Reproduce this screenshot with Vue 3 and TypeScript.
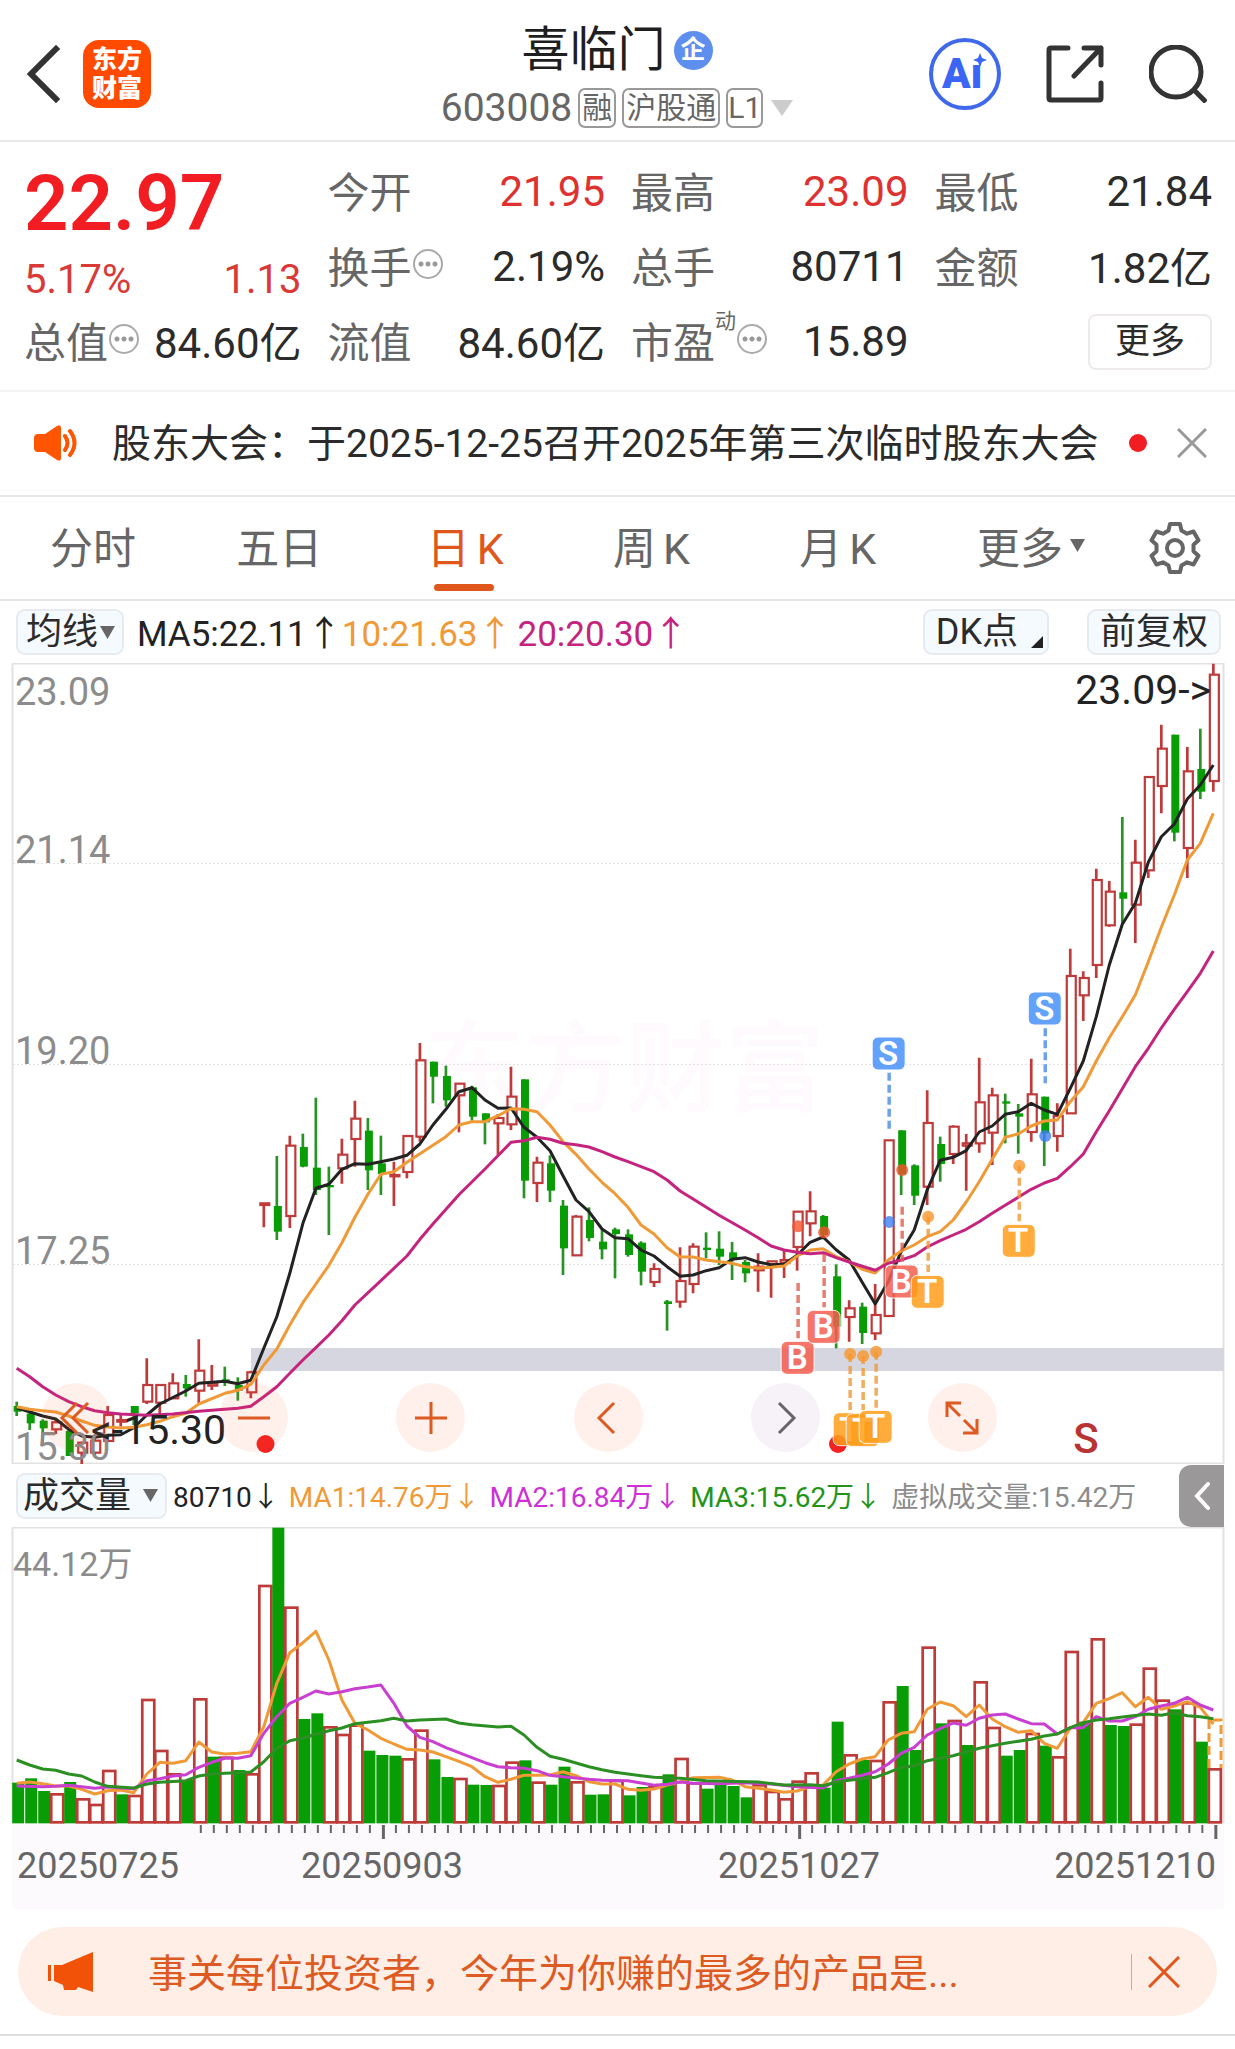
<script setup lang="ts">
import { ref } from 'vue'

type Kind = 'r' | 'g'
type Candle = [Kind, number, number, number, number]
type Point = [number, number]

const STEP = 13.007
const FIRST_X = 16.7
const cx = (i: number): number => FIRST_X + i * STEP
// Levels are stored in thirds of a pixel, counted from a shared base line of each pane.
const py = (v: number): number => (v + 1011) / 3
const vy = (v: number): number => (v - 201) / 3
const VOLUME_BASE = vy(1087)

// kind, high, body top, body bottom, low
const candles: Candle[] = [
  ['g', 1205, 1218, 1235, 1248], ['g', 1235, 1241, 1270, 1290], ['g', 1258, 1262, 1285, 1330], ['r', 1258, 1267, 1288, 1302],
  ['g', 1290, 1293, 1368, 1368], ['r', 1325, 1328, 1358, 1392], ['r', 1315, 1322, 1358, 1370], ['r', 1218, 1245, 1323, 1323],
  ['r', 1245, 1260, 1265, 1280], ['g', 1218, 1218, 1240, 1275], ['r', 1075, 1155, 1205, 1212], ['r', 1155, 1155, 1208, 1242],
  ['r', 1120, 1150, 1195, 1197], ['g', 1125, 1152, 1165, 1190], ['r', 1018, 1112, 1172, 1210], ['r', 1095, 1150, 1157, 1170],
  ['g', 1100, 1138, 1144, 1158], ['g', 1132, 1155, 1172, 1202], ['r', 1112, 1117, 1177, 1195], ['r', 608, 610, 615, 682],
  ['g', 468, 618, 695, 720], ['r', 407, 437, 648, 684], ['g', 401, 441, 500, 502], ['g', 293, 503, 570, 585],
  ['g', 500, 555, 562, 705], ['r', 416, 464, 505, 551], ['r', 302, 356, 417, 500], ['g', 354, 392, 511, 570],
  ['g', 407, 490, 522, 585], ['r', 485, 525, 529, 618], ['r', 408, 408, 516, 535], ['r', 129, 181, 410, 425],
  ['g', 185, 185, 230, 310], ['g', 197, 228, 301, 320], ['r', 251, 251, 286, 397], ['g', 257, 262, 350, 362],
  ['g', 340, 340, 367, 433], ['r', 342, 354, 370, 464], ['r', 200, 290, 373, 390], ['g', 238, 238, 542, 595],
  ['r', 470, 488, 549, 606], ['g', 466, 490, 572, 606], ['g', 600, 617, 745, 825], ['r', 645, 650, 766, 768],
  ['g', 622, 660, 714, 724], ['g', 690, 725, 748, 778], ['g', 683, 688, 702, 835], ['g', 688, 703, 765, 770],
  ['g', 724, 728, 815, 856], ['r', 790, 807, 846, 861], ['g', 900, 904, 912, 992], ['r', 742, 843, 905, 923],
  ['r', 730, 740, 852, 880], ['g', 697, 743, 750, 775], ['g', 694, 746, 770, 795], ['g', 726, 757, 780, 840],
  ['g', 780, 786, 820, 847], ['r', 760, 800, 811, 875], ['r', 782, 784, 793, 893], ['r', 752, 780, 788, 834],
  ['r', 635, 635, 741, 812], ['r', 574, 634, 670, 709], ['g', 645, 648, 705, 718], ['g', 793, 829, 980, 1045],
  ['r', 901, 925, 951, 1025], ['g', 908, 920, 999, 1032], ['r', 852, 945, 1000, 1020], ['r', 421, 421, 948, 948],
  ['g', 391, 391, 523, 585], ['g', 493, 496, 587, 615], ['r', 271, 369, 560, 615], ['g', 410, 432, 492, 545],
  ['r', 376, 380, 462, 492], ['r', 402, 430, 437, 572], ['r', 173, 307, 430, 458], ['r', 263, 286, 398, 495],
  ['g', 281, 304, 311, 430], ['g', 312, 340, 350, 461], ['r', 176, 283, 396, 425], ['g', 290, 290, 400, 498],
  ['r', 310, 348, 408, 455], ['r', -154, -72, 340, 340], ['r', -86, -66, -14, 63], ['r', -394, -360, -105, -66],
  ['r', -357, -325, -224, -220], ['g', -549, -323, -304, -225], ['r', -481, -412, -286, -171], ['r', -669, -669, -389, -366],
  ['r', -826, -754, -642, -560], ['g', -796, -796, -502, -476], ['r', -759, -686, -456, -366], ['g', -814, -693, -625, -603],
  ['r', -1009, -976, -657, -625],
]

const priceLines: { color: string; points: Point[] }[] = [
  {
    color: '#222222',
    points: [[0, 1223], [2, 1248], [3, 1257], [4, 1288], [5, 1308], [6, 1312], [7, 1306], [8, 1304], [9, 1283], [10, 1245], [11, 1212], [13, 1173], [14, 1150], [16, 1144], [17, 1151], [18, 1141], [19, 1045], [20, 950], [21, 820], [22, 670], [23, 565], [24, 553], [25, 508], [26, 491], [27, 493], [28, 485], [29, 477], [30, 466], [31, 432], [32, 375], [33, 328], [34, 275], [35, 263], [36, 300], [37, 325], [38, 324], [39, 382], [40, 412], [41, 452], [42, 527], [43, 600], [44, 635], [45, 687], [46, 713], [47, 716], [48, 750], [49, 768], [50, 800], [51, 829], [52, 825], [53, 812], [54, 803], [55, 778], [56, 773], [57, 786], [58, 794], [59, 793], [60, 766], [61, 727], [62, 711], [63, 749], [64, 780], [65, 847], [66, 912], [67, 845], [68, 755], [69, 690], [70, 570], [71, 481], [72, 472], [73, 452], [74, 396], [75, 378], [76, 343], [77, 335], [78, 310], [79, 330], [80, 343], [81, 265], [82, 183], [83, 50], [84, -105], [85, -227], [86, -290], [87, -413], [88, -490], [89, -528], [90, -603], [91, -645], [92, -705]],
  },
  {
    color: '#f09a37',
    points: [[0, 1220], [1, 1228], [2, 1232], [3, 1236], [4, 1248], [5, 1263], [6, 1276], [7, 1281], [8, 1284], [9, 1282], [10, 1274], [11, 1264], [12, 1250], [13, 1240], [14, 1212], [16, 1180], [17, 1171], [18, 1153], [19, 1095], [20, 1047], [21, 975], [22, 908], [23, 852], [24, 796], [25, 728], [26, 652], [27, 583], [28, 523], [29, 515], [30, 487], [33, 410], [34, 375], [35, 365], [36, 365], [37, 347], [38, 326], [39, 328], [40, 335], [41, 375], [42, 425], [43, 463], [44, 507], [45, 547], [46, 581], [47, 622], [48, 675], [49, 702], [50, 743], [51, 771], [52, 771], [53, 780], [54, 785], [55, 790], [56, 800], [57, 804], [58, 802], [59, 798], [60, 768], [61, 750], [62, 746], [63, 770], [64, 785], [65, 808], [66, 819], [67, 780], [68, 753], [69, 735], [70, 710], [71, 695], [72, 660], [73, 606], [74, 545], [75, 478], [76, 412], [77, 402], [78, 378], [79, 363], [80, 360], [81, 305], [82, 260], [83, 183], [84, 113], [85, 50], [86, -15], [87, -115], [88, -218], [89, -315], [90, -420], [91, -470], [92, -560]],
  },
  {
    color: '#c4247e',
    points: [[0, 1105], [1, 1130], [2, 1160], [3, 1185], [4, 1205], [5, 1220], [6, 1232], [7, 1238], [8, 1242], [10, 1246], [12, 1242], [14, 1234], [16, 1228], [17, 1225], [18, 1219], [19, 1190], [20, 1160], [21, 1120], [22, 1080], [23, 1043], [24, 1005], [25, 962], [26, 915], [28, 842], [30, 768], [31, 718], [32, 672], [34, 584], [36, 507], [38, 427], [39, 422], [40, 412], [41, 418], [42, 430], [43, 434], [44, 441], [45, 455], [46, 471], [47, 485], [48, 500], [49, 515], [50, 540], [51, 573], [52, 597], [54, 646], [56, 690], [57, 713], [58, 738], [59, 750], [60, 757], [61, 761], [62, 758], [63, 773], [64, 786], [65, 799], [66, 811], [67, 790], [68, 780], [69, 767], [70, 741], [71, 722], [72, 705], [73, 688], [74, 665], [75, 640], [76, 616], [77, 592], [78, 568], [79, 549], [80, 535], [81, 500], [82, 462], [83, 395], [84, 332], [85, 266], [86, 200], [87, 145], [88, 84], [89, 28], [90, -25], [91, -80], [92, -147]],
  },
]

const volumes: string[] = (
  'g968 g955 g993 r1003 g966 r1018 r1035 r933 g1003 r1008 r720 r873 r943 g960 r718 g890 r893 g930 r943 r378 ' +
  'g203 r443 g777 g760 r802 r825 r797 g872 g885 g887 r898 r812 g898 g951 r957 g974 g975 r978 r908 g901 ' +
  'r968 g974 g920 r967 g1004 g1003 r963 g1006 g981 r980 g943 r897 r970 g986 g975 g978 g1012 r976 r996 r1018 ' +
  'r965 r940 g983 g785 r886 g900 r903 r727 g678 g870 r563 g790 r783 g855 r667 r804 g887 g870 r822 g857 ' +
  'r892 r576 g785 r538 g795 g798 r794 r626 r722 g748 r730 g845 r928'
).split(' ')

const bars = volumes.map((s, i) => ({ green: s[0] === 'g', x: cx(i), y: vy(Number(s.slice(1))) }))

const volumeLines: { color: string; points: Point[] }[] = [
  {
    color: '#f09a37',
    points: [[0, 970], [1, 966], [2, 971], [3, 978], [4, 978], [5, 988], [6, 1002], [7, 992], [8, 990], [9, 998], [10, 942], [11, 907], [12, 910], [13, 902], [14, 846], [15, 876], [16, 882], [17, 880], [18, 875], [19, 800], [20, 670], [21, 578], [22, 548], [23, 514], [24, 600], [25, 720], [26, 790], [27, 810], [28, 835], [29, 852], [30, 868], [31, 870], [32, 876], [33, 890], [34, 904], [35, 920], [36, 950], [37, 967], [38, 958], [39, 946], [40, 946], [41, 945], [42, 935], [43, 947], [44, 965], [45, 972], [46, 972], [47, 988], [48, 991], [49, 987], [50, 975], [51, 966], [52, 953], [54, 952], [55, 960], [56, 980], [57, 985], [58, 990], [59, 997], [60, 993], [61, 980], [62, 975], [63, 935], [64, 912], [65, 897], [66, 890], [67, 840], [68, 820], [69, 815], [70, 748], [71, 726], [72, 737], [73, 770], [74, 735], [75, 777], [76, 800], [77, 817], [78, 812], [79, 850], [80, 865], [81, 805], [82, 787], [83, 730], [84, 716], [85, 698], [86, 740], [87, 712], [88, 748], [89, 738], [90, 725], [91, 742], [92, 792]],
  },
  {
    color: '#c93fd0',
    points: [[0, 978], [2, 980], [3, 979], [4, 976], [5, 980], [6, 985], [7, 981], [9, 986], [10, 962], [11, 956], [12, 948], [13, 944], [14, 922], [15, 907], [16, 895], [17, 895], [18, 887], [19, 820], [20, 770], [21, 730], [22, 712], [23, 693], [24, 702], [25, 695], [26, 686], [27, 681], [28, 675], [29, 730], [30, 798], [31, 832], [32, 845], [33, 863], [34, 878], [35, 893], [36, 908], [37, 920], [38, 923], [39, 925], [40, 932], [41, 946], [42, 950], [43, 954], [44, 958], [45, 961], [47, 962], [48, 969], [49, 976], [50, 973], [51, 966], [52, 970], [54, 971], [56, 968], [58, 972], [60, 980], [62, 984], [63, 962], [64, 955], [65, 946], [66, 935], [67, 912], [68, 880], [69, 862], [70, 825], [71, 806], [72, 789], [73, 796], [74, 775], [75, 765], [76, 762], [77, 777], [78, 791], [79, 792], [80, 822], [81, 803], [82, 803], [83, 770], [84, 783], [85, 783], [86, 770], [87, 748], [88, 738], [89, 730], [90, 712], [91, 735], [92, 750]],
  },
  {
    color: '#2b8f23',
    points: [[0, 900], [1, 915], [2, 927], [3, 931], [4, 942], [5, 948], [6, 966], [7, 979], [9, 984], [10, 972], [11, 967], [13, 962], [14, 948], [15, 942], [16, 940], [17, 938], [18, 936], [19, 905], [20, 865], [21, 842], [22, 834], [23, 823], [24, 812], [25, 804], [26, 791], [28, 782], [29, 775], [30, 783], [31, 780], [33, 777], [34, 789], [35, 794], [37, 801], [38, 799], [39, 825], [40, 862], [41, 889], [42, 898], [43, 909], [44, 920], [45, 929], [46, 937], [48, 947], [49, 952], [51, 955], [53, 962], [57, 966], [59, 975], [61, 974], [62, 977], [63, 966], [64, 961], [65, 956], [66, 952], [67, 938], [68, 922], [69, 918], [70, 902], [72, 887], [74, 865], [76, 850], [78, 838], [79, 828], [80, 822], [81, 803], [82, 788], [83, 780], [84, 776], [85, 771], [87, 762], [88, 766], [89, 758], [90, 767], [91, 770], [92, 776]],
  },
]

const toPath = (points: Point[], y: (v: number) => number): string =>
  points.map(([i, v]) => `${cx(i).toFixed(1)},${y(v).toFixed(1)}`).join(' ')

// letter, candle index, badge top, dash start, dash end, dot level
interface Mark { letter: 'S' | 'B' | 'T'; i: number; top: number; from: number; to: number; dot: number }
const marks: Mark[] = [
  { letter: 'S', i: 67, top: 111, from: 218, to: 386, dot: 666 },
  { letter: 'S', i: 79, top: -24, from: 85, to: 250, dot: 408 },
  { letter: 'B', i: 60, top: 1024, from: 849, to: 1015, dot: 679 },
  { letter: 'B', i: 62, top: 931, from: 762, to: 922, dot: 697 },
  { letter: 'B', i: 68, top: 795, from: 620, to: 785, dot: 510 },
  { letter: 'T', i: 64, top: 1238, from: 1062, to: 1230, dot: 1062 },
  { letter: 'T', i: 65, top: 1241, from: 1068, to: 1230, dot: 1068 },
  { letter: 'T', i: 66, top: 1231, from: 1055, to: 1225, dot: 1055 },
  { letter: 'T', i: 70, top: 826, from: 650, to: 816, dot: 650 },
  { letter: 'T', i: 77, top: 673, from: 497, to: 664, dot: 497 },
]

const ticks = Array.from({ length: 79 }, (_, k) => k + 14)
const isMajor = (i: number): boolean => i === 28 || i === 60 || i === 92

interface Tab { name: string; suffix?: string }
const tabs: Tab[] = [{ name: '分时' }, { name: '五日' }, { name: '日', suffix: 'K' }, { name: '周', suffix: 'K' }, { name: '月', suffix: 'K' }]
const activeTab = ref('日')
const showNotice = ref(true)
const showBanner = ref(true)
const average = ref('均线')
const indicator = ref('成交量')
</script>

<template>
  <div class="page">
    <header class="top">
      <div class="top-left">
        <button class="bare" aria-label="返回">
          <svg width="34" height="58" viewBox="0 0 34 58"><path d="M29 4 4 29l25 25" fill="none" stroke="#333" stroke-width="6" stroke-linecap="square" /></svg>
        </button>
        <a class="logo" href="#"><span>东方</span><span>财富</span></a>
      </div>
      <div class="top-mid">
        <h1>喜临门<span class="corp">企</span></h1>
        <div class="code">
          <span class="code-num">603008</span>
          <span class="tag">融</span><span class="tag">沪股通</span><span class="tag level">L1</span>
          <button class="bare code-more" aria-label="展开">
            <svg width="22" height="16" viewBox="0 0 22 16"><path d="M0 0h22L11 16z" fill="#ccc" /></svg>
          </button>
        </div>
      </div>
      <div class="top-right">
        <button class="bare" aria-label="Ai">
          <svg width="72" height="72" viewBox="0 0 72 72">
            <circle cx="36" cy="36" r="34" fill="none" stroke="#3f69ea" stroke-width="4" />
            <text x="13" y="50" class="ai">Aı</text>
            <path d="M51 15l2 5 5 2-5 2-2 5-2-5-5-2 5-2z" fill="#3b66f5" />
          </svg>
        </button>
        <button class="bare" aria-label="分享">
          <svg width="58" height="58" viewBox="0 0 58 58" fill="none" stroke="#333" stroke-width="5" stroke-linecap="round" stroke-linejoin="round">
            <path d="M22 3H5q-2 0-2 2v48q0 2 2 2h48q2 0 2-2V38M38 3h17v17M55 3 28 31" />
          </svg>
        </button>
        <button class="bare" aria-label="搜索">
          <svg width="58" height="58" viewBox="0 0 58 58" fill="none" stroke="#333" stroke-width="5">
            <circle cx="27" cy="27" r="25" /><path d="M45 45l12 12" />
          </svg>
        </button>
      </div>
    </header>

    <section class="quote">
      <div class="cell price">
        <strong>22.97</strong>
        <div class="change"><span>5.17%</span><span>1.13</span></div>
      </div>
      <div class="cell"><span class="label">今开</span><span class="red">21.95</span></div>
      <div class="cell"><span class="label">最高</span><span class="red">23.09</span></div>
      <div class="cell"><span class="label">最低</span><span>21.84</span></div>
      <div class="cell"><span class="label">换手<i class="info"></i></span><span>2.19%</span></div>
      <div class="cell"><span class="label">总手</span><span>80711</span></div>
      <div class="cell"><span class="label">金额</span><span class="mixed">1.82亿</span></div>
      <div class="cell"><span class="label">总值<i class="info"></i></span><span class="mixed">84.60亿</span></div>
      <div class="cell"><span class="label">流值</span><span class="mixed">84.60亿</span></div>
      <div class="cell"><span class="label">市盈<sup>动</sup><i class="info"></i></span><span>15.89</span></div>
      <div class="cell end"><button class="more">更多</button></div>
    </section>

    <section v-if="showNotice" class="notice">
      <svg width="46" height="36" viewBox="0 0 46 36">
        <path d="M4 9h7L23 1q4-2 4 2v30q0 4-4 2L11 27H4q-4 0-4-4V13q0-4 4-4z" fill="#ff5500" />
        <path d="M31 11q5 7 0 14M36 6q9 12 0 24" fill="none" stroke="#ff5500" stroke-width="4" stroke-linecap="round" />
      </svg>
      <a href="#" class="notice-text">股东大会：于2025-12-25召开2025年第三次临时股东大会</a>
      <span class="dot"></span>
      <button class="bare" aria-label="关闭" @click="showNotice = false">
        <svg width="30" height="30" viewBox="0 0 30 30"><path d="M1 1l28 28M29 1 1 29" stroke="#999" stroke-width="3" /></svg>
      </button>
    </section>

    <nav class="tabs">
      <button v-for="t in tabs" :key="t.name" class="bare tab" :class="{ on: t.name === activeTab }" @click="activeTab = t.name">
        {{ t.name }}<span v-if="t.suffix" class="suffix">{{ t.suffix }}</span>
      </button>
      <button class="bare tab tab-more">更多
        <svg width="15" height="13" viewBox="0 0 15 13"><path d="M0 0h15L7.500 13z" fill="#666" /></svg>
      </button>
      <button class="bare gear" aria-label="设置">
        <svg width="52" height="52" viewBox="0 0 52 52" fill="none" stroke="#666" stroke-width="4" stroke-linejoin="round">
          <path d="M21 2h10l1.500 6.500 5.500 3.200 6.500-2.200 5 8.800-5 4.500v6.400l5 4.500-5 8.800-6.500-2.200-5.500 3.200L31 50H21l-1.500-6.500-5.500-3.200-6.500 2.200-5-8.800 5-4.500v-6.400l-5-4.500 5-8.800 6.500 2.200 5.500-3.200z" />
          <circle cx="26" cy="26" r="8" />
        </svg>
      </button>
    </nav>

    <div class="averages">
      <span class="pick">
        <select v-model="average" aria-label="主图指标"><option>均线</option></select>
        <svg width="15" height="13" viewBox="0 0 15 13"><path d="M0 0h15L7.500 13z" fill="#666" /></svg>
      </span>
      <span class="ma black">MA5:22.11↑</span>
      <span class="ma orange">10:21.63↑</span>
      <span class="ma magenta">20:20.30↑</span>
      <button class="chip dk">DK点<svg width="12" height="12" viewBox="0 0 12 12"><path d="M12 0v12H0z" fill="#222" /></svg></button>
      <button class="chip">前复权</button>
    </div>

    <div class="chart">
      <svg class="plot" viewBox="0 0 1235 801">
        <text x="625" y="441" class="watermark" text-anchor="middle">东方财富</text>
        <rect x="12.500" y="0.500" width="1211" height="800" fill="none" stroke="#e2e2e2" stroke-width="2" />
        <path d="M13 200.500H1223M13 401.500H1223M13 601.500H1223" stroke="#e2e2e2" stroke-dasharray="2 2" />
        <rect x="251" y="685" width="973" height="23" fill="#d6d6e0" />

        <g v-for="(c, i) in candles" :key="i">
          <template v-if="c[0] === 'g'">
            <path :d="`M${cx(i)} ${py(c[1])}V${py(c[4])}`" stroke="#2a9326" stroke-width="2.700" />
            <rect :x="cx(i) - 3" :y="py(c[2])" width="8" :height="(c[3] - c[2]) / 3" fill="#089c05" />
          </template>
          <template v-else>
            <path :d="`M${cx(i)} ${py(c[1])}V${py(c[2])}M${cx(i)} ${py(c[3])}V${py(c[4])}`" stroke="#bf3a3a" stroke-width="2.700" />
            <rect :x="cx(i) - 3.500" :y="py(c[2])" width="9" :height="(c[3] - c[2]) / 3" fill="none" stroke="#bf3a3a" stroke-width="2.200" />
          </template>
        </g>

        <polyline v-for="l in priceLines" :key="l.color" :points="toPath(l.points, py)" fill="none" :stroke="l.color" stroke-width="3" stroke-linejoin="round" />

        <circle cx="265.500" cy="781" r="9" fill="#f22222" />
        <circle cx="838" cy="781" r="9" fill="#f22222" />

        <g v-for="m in marks" :key="m.i" :class="['mark', m.letter]">
          <path :d="`M${cx(m.i) + 1} ${py(m.from)}V${py(m.to)}`" stroke-width="3.500" stroke-dasharray="8 4" />
          <circle :cx="cx(m.i) + 1" :cy="py(m.dot)" r="6" />
          <rect :x="cx(m.i) - 16" :y="py(m.top)" width="33" height="33" rx="6" />
          <text :x="cx(m.i)" :y="py(m.top) + 28" text-anchor="middle">{{ m.letter }}</text>
        </g>

        <g class="scale">
          <text x="15" y="42">23.09</text>
          <text x="15" y="200">21.14</text>
          <text x="15" y="401">19.20</text>
          <text x="15" y="601">17.25</text>
          <text x="15" y="797">15.30</text>
        </g>
        <text x="1211" y="41" class="peak" text-anchor="end">23.09-&gt;</text>
        <text x="91" y="781" class="peak">&lt;-15.30</text>
        <text x="1086" y="790" class="sell" text-anchor="middle">S</text>
      </svg>
      <div class="tools">
        <button aria-label="最早"><svg viewBox="0 0 36 36"><path d="M18 3 3 18l15 15M29 3 14 18l15 15" /></svg></button>
        <button aria-label="缩小"><svg viewBox="0 0 36 36"><path d="M2 18h32" /></svg></button>
        <button aria-label="放大"><svg viewBox="0 0 36 36"><path d="M2 18h32M18 2v32" /></svg></button>
        <button aria-label="向前"><svg viewBox="0 0 36 36"><path d="M24 3 9 18l15 15" /></svg></button>
        <button aria-label="向后" class="off"><svg viewBox="0 0 36 36"><path d="M12 3l15 15-15 15" /></svg></button>
        <button aria-label="全屏"><svg viewBox="0 0 36 36"><path d="M17 3H3v14M3 3l13 13M19 33h14V19M33 33 20 20" /></svg></button>
      </div>
    </div>

    <div class="volume-bar">
      <span class="pick wide">
        <select v-model="indicator" aria-label="副图指标"><option>成交量</option></select>
        <svg width="15" height="13" viewBox="0 0 15 13"><path d="M0 0h15L7.500 13z" fill="#666" /></svg>
      </span>
      <span class="vol black">80710↓</span>
      <span class="vol orange">MA1:14.76万↓</span>
      <span class="vol purple">MA2:16.84万↓</span>
      <span class="vol green">MA3:15.62万↓</span>
      <span class="vol gray">虚拟成交量:15.42万</span>
      <button class="fold" aria-label="展开指标">
        <svg width="18" height="28" viewBox="0 0 18 28"><path d="M15 2 4 14l11 12" fill="none" stroke="#fff" stroke-width="4" stroke-linecap="round" /></svg>
      </button>
    </div>

    <svg class="plot" viewBox="0 0 1235 382">
      <rect x="12" y="296" width="1212" height="86" fill="#fdfafe" />
      <path d="M12.500 296V0.500H1223.500V296" fill="none" stroke="#e2e2e2" stroke-width="2" />
      <g v-for="(b, i) in bars" :key="i">
        <rect v-if="b.green" :x="b.x - 4.500" :y="b.y" width="12" :height="VOLUME_BASE + 1 - b.y" fill="#089c05" />
        <rect v-else :x="b.x - 4.500" :y="b.y" width="12" :height="VOLUME_BASE - b.y" fill="#fff" stroke="#bd3b39" stroke-width="2.700" />
      </g>
      <path d="M1209 241V193H1221V241" fill="none" stroke="#f09a37" stroke-width="3" stroke-dasharray="9 4" />
      <polyline v-for="l in volumeLines" :key="l.color" :points="toPath(l.points, vy)" fill="none" :stroke="l.color" stroke-width="3" stroke-linejoin="round" />
      <rect v-for="i in ticks" :key="i" :x="cx(i) + 1" y="298" :width="isMajor(i) ? 3 : 2" :height="isMajor(i) ? 14 : 8" fill="#666" />
      <text x="13" y="49" class="scale-text">44.12万</text>
      <g class="dates">
        <text x="17" y="351">20250725</text>
        <text x="382" y="351" text-anchor="middle">20250903</text>
        <text x="799" y="351" text-anchor="middle">20251027</text>
        <text x="1216" y="351" text-anchor="end">20251210</text>
      </g>
    </svg>

    <footer class="foot">
      <div v-if="showBanner" class="banner">
        <svg width="46" height="40" viewBox="0 0 46 40" fill="#f25207">
          <path d="M0 13h3v16H0zM6 13h8L45 0v40l-15-5-2 3H16l-1-5-9-4z" />
        </svg>
        <a href="#">事关每位投资者，今年为你赚的最多的产品是...</a>
        <span class="rule"></span>
        <button class="bare" aria-label="关闭" @click="showBanner = false">
          <svg width="32" height="32" viewBox="0 0 32 32"><path d="M1 1l30 30M31 1 1 31" stroke="#e0561c" stroke-width="3" /></svg>
        </button>
      </div>
    </footer>
  </div>
</template>

<style>
body {
  background: #fff;
}
</style>

<style scoped>
.page {
  font-family: Roboto, "Noto Sans CJK SC", sans-serif;
  color: #2b2b2b;
  background: #fff;
  overflow: hidden;
}
.page * {
  box-sizing: border-box;
}
button,
select {
  font: inherit;
  color: inherit;
}
a {
  color: inherit;
  text-decoration: none;
}
svg {
  display: block;
  flex: none;
}
.bare {
  border: 0;
  background: none;
  padding: 0;
}

.top {
  display: grid;
  grid-template-columns: 1fr auto 1fr;
  height: 142px;
  padding: 0 28px 0 27px;
  border-bottom: 2px solid #e8e8ea;
}
.top-left,
.top-right {
  display: flex;
  align-items: center;
  padding-top: 8px;
}
.top-left {
  gap: 22px;
}
.top-right {
  justify-content: flex-end;
  gap: 45px;
}
.logo {
  display: flex;
  flex-direction: column;
  align-items: center;
  justify-content: center;
  width: 68px;
  height: 68px;
  border-radius: 16px;
  background: #ff4a00;
  color: #fff;
  font-size: 25px;
  font-weight: 900;
  line-height: 29px;
}
.ai {
  font-size: 42px;
  font-weight: 900;
  fill: #3b66f5;
}
.top-mid {
  display: flex;
  flex-direction: column;
  align-items: center;
  padding-top: 21px;
  gap: 9px;
}
.top-mid h1 {
  display: flex;
  align-items: center;
  gap: 8px;
  margin: 0;
  font-size: 48px;
  font-weight: 400;
  line-height: 58px;
  color: #1f1f1f;
}
.corp {
  width: 39px;
  height: 39px;
  border-radius: 50%;
  background: #5f8fee;
  color: #fff;
  font-size: 25px;
  font-weight: 700;
  line-height: 38px;
  text-align: center;
}
.code {
  display: flex;
  align-items: center;
  gap: 6px;
  height: 40px;
  color: #666;
}
.code-num {
  font-size: 39px;
  line-height: 40px;
}
.tag {
  height: 40px;
  padding: 0 2px;
  border: 2px solid #999;
  border-radius: 7px;
  font-size: 30px;
  line-height: 36px;
}
.level {
  padding: 0;
}
.code-more {
  margin-left: 2px;
}

.quote {
  display: grid;
  grid-template-columns: repeat(4, 1fr);
  grid-template-rows: 75px 75px 75px;
  column-gap: 26px;
  padding: 12px 23px 11px 24px;
  border-bottom: 2px solid #f3f3f3;
  font-size: 42px;
}
.cell {
  display: flex;
  align-items: center;
  justify-content: space-between;
  white-space: nowrap;
}
.cell.end {
  justify-content: flex-end;
}
.price {
  grid-row: span 2;
  flex-direction: column;
  align-items: stretch;
  justify-content: flex-start;
  color: #d93a37;
}
.price strong {
  font-size: 78px;
  font-weight: 600;
  line-height: 100px;
  color: #f21d22;
}
.change {
  display: flex;
  justify-content: space-between;
  font-size: 40px;
  line-height: 52px;
}
.label {
  display: flex;
  align-items: center;
  color: #666;
}
.label,
.mixed {
  padding-bottom: 5px;
}
.label sup {
  align-self: flex-start;
  font-size: 21px;
  line-height: 24px;
}
.info {
  width: 30px;
  height: 30px;
  margin-left: 1px;
  border: 2px solid #aaa;
  border-radius: 50%;
  background:
    radial-gradient(circle at 6px 13px, #999 2px, transparent 3px),
    radial-gradient(circle at 13px 13px, #999 2px, transparent 3px),
    radial-gradient(circle at 20px 13px, #999 2px, transparent 3px);
}
.red {
  color: #dd3230;
}
.more {
  width: 124px;
  height: 56px;
  padding: 0;
  border: 2px solid #eee9eb;
  border-radius: 8px;
  background: #fff;
  font-size: 35px;
  line-height: 50px;
}

.notice {
  display: flex;
  align-items: center;
  height: 105px;
  padding: 0 28px 2px 34px;
  border-bottom: 2px solid #e8e8e8;
}
.notice-text {
  margin-left: 32px;
  padding-bottom: 6px;
  font-size: 39px;
  white-space: nowrap;
}
.dot {
  width: 18px;
  height: 18px;
  margin-left: auto;
  margin-right: 30px;
  border-radius: 50%;
  background: #f21d22;
}

.tabs {
  display: flex;
  align-items: center;
  height: 104px;
  padding-right: 34px;
  border-bottom: 2px solid #e5e5e5;
  font-size: 43px;
  color: #666;
}
.tab {
  position: relative;
  flex: 0 0 15.5%;
  height: 102px;
  padding-bottom: 6px;
  white-space: nowrap;
}
.suffix {
  margin-left: 7px;
}
.tab.on {
  color: #e0571b;
}
.tab.on::after {
  content: "";
  position: absolute;
  left: 50%;
  bottom: 8px;
  width: 60px;
  height: 7px;
  margin-left: -31px;
  border-radius: 4px;
  background: #e0571b;
}
.tab-more {
  display: flex;
  align-items: center;
  justify-content: center;
  gap: 7px;
  flex-basis: 16.7%;
}
.gear {
  margin-left: auto;
}

.averages,
.volume-bar {
  display: flex;
  align-items: center;
  padding-left: 16px;
  white-space: nowrap;
}
.averages {
  height: 62px;
  padding-right: 14px;
  font-size: 36px;
}
.pick {
  position: relative;
  display: flex;
  align-items: center;
}
.pick select {
  width: 108px;
  height: 46px;
  padding: 0 0 0 8px;
  border: 2px solid #e8eaf2;
  border-radius: 9px;
  background: #f5faff;
  appearance: none;
  font-size: 36px;
  line-height: 42px;
}
.pick svg {
  position: absolute;
  right: 9px;
  pointer-events: none;
}
.pick.wide select {
  width: 151px;
  padding-left: 5px;
}
.ma {
  padding-bottom: 4px;
  font-size: 35px;
}
.averages .black {
  margin-left: 13px;
}
.averages .magenta {
  margin-left: 5px;
  margin-right: auto;
}
.black {
  color: #222;
}
.orange {
  color: #f09a37;
}
.magenta {
  color: #c4247e;
}
.purple {
  color: #cc30d6;
}
.green {
  color: #239419;
}
.gray {
  color: #8c8c8c;
}
.chip {
  display: flex;
  align-items: center;
  height: 46px;
  padding: 0 11px;
  border: 2px solid #e8eaf2;
  border-radius: 9px;
  background: #f5faff;
  font-size: 36px;
  line-height: 42px;
}
.dk {
  gap: 13px;
  padding-right: 4px;
  margin-right: 38px;
}
.dk svg {
  align-self: flex-end;
  margin-bottom: 5px;
}

.chart {
  position: relative;
}
.plot {
  width: 100%;
  height: auto;
}
.watermark {
  font-size: 100px;
  font-weight: 500;
  fill: #fefafe;
}
.scale text {
  font-size: 38px;
  fill: #8c8c8c;
}
.scale-text {
  font-size: 34px;
  fill: #8c8c8c;
}
.peak {
  font-size: 41px;
  fill: #222;
}
.sell {
  font-size: 42px;
  font-weight: 500;
  fill: #b83434;
}
.dates text {
  font-size: 36px;
  fill: #666;
}
.mark text {
  font-size: 33px;
  font-weight: 600;
  fill: #fff;
}
.mark rect {
  opacity: 0.85;
  stroke: #fff;
}
.mark circle {
  opacity: 0.8;
}
.mark path {
  opacity: 0.8;
}
.S rect {
  fill: #4792fa;
}
.S path {
  stroke: #4a8ae8;
}
.S circle {
  fill: #3f80f5;
}
.B rect {
  fill: #f55f50;
}
.B path {
  stroke: #e0604f;
}
.B circle {
  fill: #f5532f;
}
.T rect {
  fill: #ff9e1c;
}
.T path {
  stroke: #f09a37;
}
.T circle {
  fill: #f8962a;
}
.tools {
  position: absolute;
  left: 42px;
  right: 238px;
  bottom: 12px;
  display: flex;
  justify-content: space-between;
}
.tools button {
  display: flex;
  align-items: center;
  justify-content: center;
  width: 69px;
  height: 69px;
  padding: 0;
  border: 0;
  border-radius: 50%;
  background: rgba(255, 92, 40, 0.09);
}
.tools svg {
  width: 36px;
  height: 36px;
  fill: none;
  stroke: #dd5a22;
  stroke-width: 3;
}
.tools .off {
  background: #f6f2f7;
}
.tools .off svg {
  stroke: #666;
}

.volume-bar {
  height: 63px;
  padding-right: 11px;
}
.vol {
  margin-left: 9px;
  padding-bottom: 2px;
  font-size: 28px;
}
.volume-bar .black {
  margin-left: 6px;
}
.fold {
  display: flex;
  align-items: center;
  justify-content: center;
  width: 45px;
  height: 62px;
  margin-left: auto;
  padding: 0;
  border: 0;
  border-radius: 12px 0 0 12px;
  background: #9b989a;
}

.foot {
  padding: 18px;
  border-bottom: 2px solid #dedede;
}
.banner {
  display: flex;
  align-items: center;
  height: 89px;
  padding: 0 37px 0 30px;
  border-radius: 45px;
  background: #ffeee6;
  color: #dd5a22;
  font-size: 39px;
  white-space: nowrap;
}
.banner a {
  margin-left: 54px;
  padding-bottom: 4px;
}
.rule {
  width: 1px;
  height: 36px;
  margin-left: auto;
  margin-right: 16px;
  background: #e8a080;
}
</style>
